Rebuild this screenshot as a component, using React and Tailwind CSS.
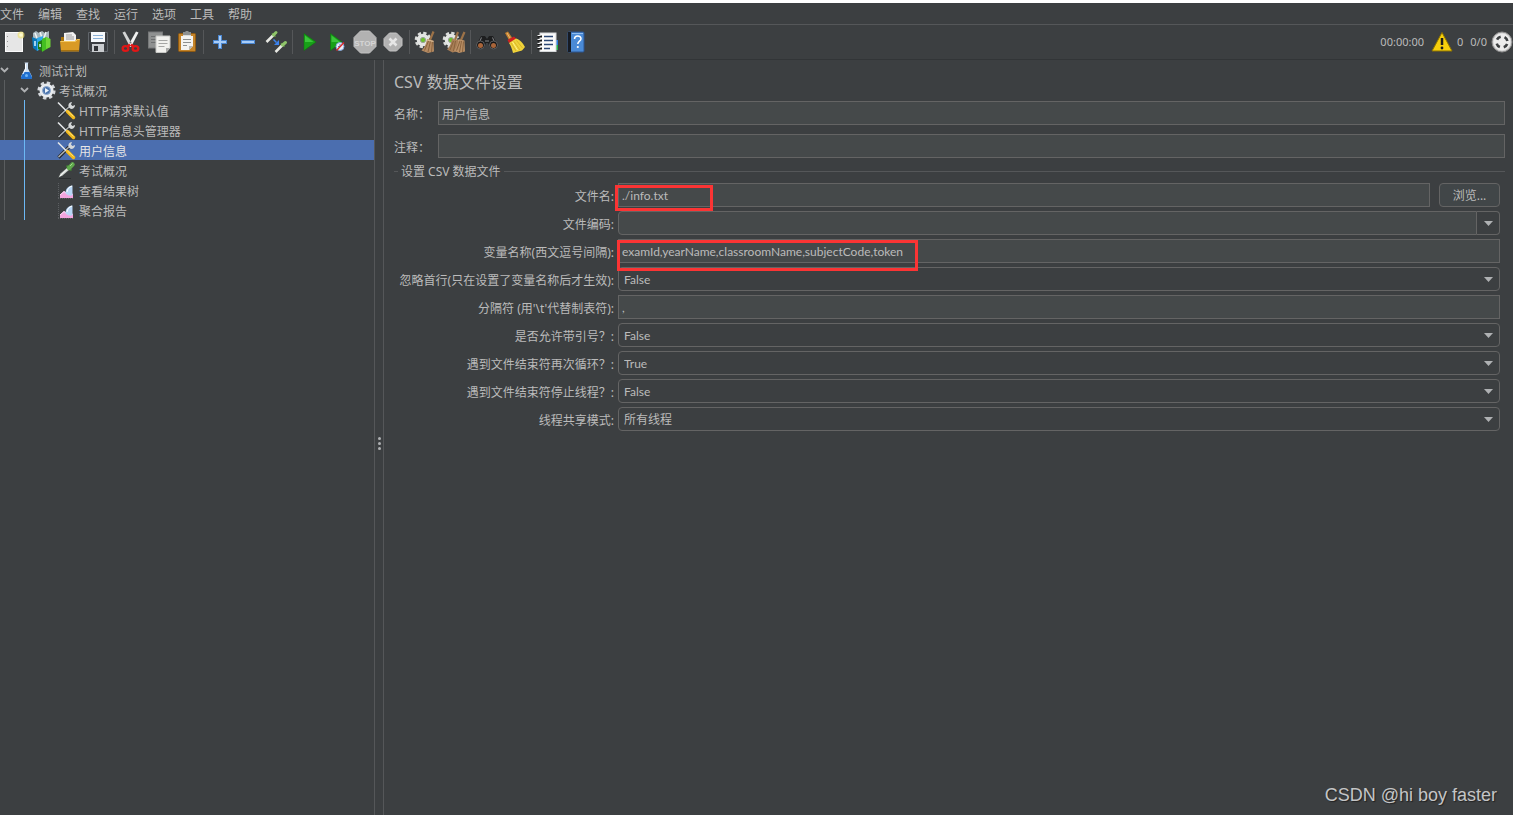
import { useState } from 'react';

const Svg = ({ size = 28, children }) => (
    <svg width={size} height={size} viewBox={`0 0 ${size} ${size}`} fill="none" aria-hidden="true">
        {children}
    </svg>
);

/* Toolbar icons, drawn on a 28px grid */
const NewIcon = () => (
    <Svg>
        <rect x="5.500" y="4.500" width="17" height="19" fill="#e6e6e6" stroke="#fafafa" />
        <path d="M7.500 8v1M7.500 13v1M7.500 18v1" stroke="#999" />
        <circle cx="21" cy="7" r="3.500" fill="#f0e27a" opacity="0.7" />
        <circle cx="21" cy="7" r="1.800" fill="#fffbd0" />
    </Svg>
);

const TemplatesIcon = () => (
    <Svg>
        <path d="M5 5l3-2 3 2 3-2 3 2 4-2v8l-8 3-8-3z" fill="#a9b7bd" />
        <path d="M7 5l2 5M12 4l2 6M18 4l-2 6" stroke="#eef4f6" strokeWidth="1.500" />
        <path d="M4 9l5 2v12l-4-3z" fill="#0b78b8" />
        <path d="M9 10l6-2v12l-6 3z" fill="#2fa8e8" />
        <path d="M10 14l4-2v11l-4-2z" fill="#1f7d12" />
        <path d="M14 11l4-2 4 2v8l-8 5z" fill="#43bf22" />
        <path d="M18 9l4.500 2v8l-4.500 2z" fill="#6ed637" />
        <path d="M7 13v5M12 16v3" stroke="#d6f2ff" strokeWidth="1.500" />
    </Svg>
);

const OpenIcon = () => (
    <Svg>
        <path d="M5 9h6l1 2h11v10H5z" fill="#a8730c" />
        <path d="M8 5l9-1 3 3v9H8z" fill="#f2f2f2" />
        <path d="M10 7h6M10 9h8M10 11h8" stroke="#9c9c9c" />
        <path d="M4 13h15l2-2h3l-1 12.500H5z" fill="#d99a25" />
        <path d="M4.500 13.500h15l2-2h2" stroke="#f3c963" />
        <path d="M5 22.500h18" stroke="#a6710f" />
    </Svg>
);

const SaveIcon = () => (
    <Svg>
        <path d="M4 4h20v20H6l-2-2z" fill="#3b3e42" />
        <path d="M4.500 4.500h19v19h-17l-2-2z" stroke="#60656a" />
        <rect x="7" y="4" width="14" height="10" fill="#f5f8fb" />
        <path d="M9 7.500h10M9 10.500h10" stroke="#8ab0d6" />
        <rect x="8" y="16" width="12" height="8" fill="#c9cccf" />
        <rect x="10" y="18" width="4" height="5" fill="#303236" />
    </Svg>
);

const CutIcon = () => (
    <Svg>
        <path d="M5.500 4.500L8 3.500 15.500 17l-2.500 2z" fill="#d4d6d6" />
        <path d="M21.500 4.500L19 3.500 11.500 17l2.500 2z" fill="#f0f1f1" />
        <circle cx="13.500" cy="14.500" r="1" fill="#777" />
        <ellipse cx="8.500" cy="20.500" rx="2.800" ry="2.400" stroke="#e01717" strokeWidth="2.400" />
        <ellipse cx="18.500" cy="20.500" rx="2.800" ry="2.400" stroke="#e01717" strokeWidth="2.400" />
        <path d="M10.500 18.500l2.500-2M16.500 18.500l-2.500-2" stroke="#e01717" strokeWidth="2.500" />
    </Svg>
);

const CopyIcon = () => (
    <Svg>
        <rect x="3.500" y="4" width="14" height="16" fill="#8f9191" stroke="#77797a" />
        <path d="M6 8.500h9M6 11.500h5M6 14.500h5" stroke="#6d6f70" />
        <path d="M11 8h14v12l-4 4.500H11z" fill="#f1f1ee" stroke="#c7c8c5" />
        <path d="M13.500 12.500h9M13.500 15.500h9M13.500 18.500h6" stroke="#a5a6a4" />
        <path d="M21 24.500V20h4z" fill="#a9aaa8" />
    </Svg>
);

const PasteIcon = () => (
    <Svg>
        <rect x="5.500" y="5.500" width="17" height="18" rx="1" fill="#c4842a" stroke="#8f5a12" />
        <path d="M8 8h12v10l-4 4H8z" fill="#f4f4f2" />
        <path d="M10 11.500h8M10 14.500h8M10 17.500h4" stroke="#8d8f8f" />
        <path d="M16 22v-4h4z" fill="#b9bab8" />
        <path d="M10 4h2l1-1h2l1 1h2v4h-8z" fill="#8e9191" />
        <path d="M10 7.500h8" stroke="#dadcdc" />
    </Svg>
);

const PlusIcon = () => (
    <Svg>
        <path d="M14 7v14M7 14h14" stroke="#4a86d0" strokeWidth="4" />
        <path d="M14 8v12M8 14h12" stroke="#a9cdf7" strokeWidth="2" />
    </Svg>
);

const MinusIcon = () => (
    <Svg>
        <path d="M7 14h14" stroke="#4a86d0" strokeWidth="4" />
        <path d="M8 14h12" stroke="#a9cdf7" strokeWidth="2" />
    </Svg>
);

const ToggleIcon = () => (
    <Svg>
        <path d="M4.500 14l7-7" stroke="#e8e9e4" strokeWidth="2.500" />
        <path d="M10 5.500l3.500 3" stroke="#6aa544" strokeWidth="1.500" />
        <path d="M11.500 7L14 4.500" stroke="#8fc46a" strokeWidth="3" strokeLinecap="round" />
        <path d="M13.500 24l7-7" stroke="#e8e9e4" strokeWidth="2.500" />
        <path d="M19 15.500l3.500 3" stroke="#6aa544" strokeWidth="1.500" />
        <path d="M20.500 17l3-2.500" stroke="#8fc46a" strokeWidth="3" strokeLinecap="round" />
        <path d="M11.500 11.500l3 3" stroke="#3a82ee" strokeWidth="1.500" />
        <path d="M17 12v5h-5z" fill="#3a82ee" />
    </Svg>
);

const RunIcon = () => (
    <Svg>
        <path d="M9 5.500L21 14 9 22.500z" fill="#18a018" stroke="#087808" strokeWidth="0.500" />
        <path d="M10 7.500L18.500 14H10z" fill="#3bc43b" />
    </Svg>
);

const RunNoPauseIcon = () => (
    <Svg>
        <path d="M7.500 5.500L19 14 7.500 22.500z" fill="#18a018" stroke="#087808" strokeWidth="0.500" />
        <path d="M8.500 7.500L17 14H8.500z" fill="#3bc43b" />
        <circle cx="17" cy="18.500" r="4" fill="#e9eef7" stroke="#7fa3d8" />
        <path d="M17 16v2.500h-2" stroke="#557fc2" />
        <path d="M13.500 22.500l7.500-8" stroke="#dc2525" strokeWidth="1.400" />
    </Svg>
);

const StopIcon = () => (
    <Svg>
        <path d="M9.500 3h9L25 9.500v9L18.500 25h-9L3 18.500v-9z" fill="#b2b2b2" stroke="#c3c3c3" />
        <text x="14" y="17.500" textAnchor="middle" fontSize="8" fontWeight="700" fontFamily="Liberation Sans, sans-serif" fill="#d6d6d6">STOP</text>
    </Svg>
);

const ShutdownIcon = () => (
    <Svg>
        <path d="M10.500 5h7l5.500 5.500v7L17.500 23h-7L5 17.500v-7z" fill="#b2b2b2" stroke="#c3c3c3" />
        <path d="M10.500 10.500l7 7M17.500 10.500l-7 7" stroke="#e6e6e6" strokeWidth="2.600" />
    </Svg>
);

const Gear = ({ cx, cy }) => (
    <>
        <circle cx={cx} cy={cy} r="7" stroke="#dcdedc" strokeWidth="2.600" strokeDasharray="3.300 2.200" />
        <circle cx={cx} cy={cy} r="6.300" fill="#e4e6e4" />
        <circle cx={cx} cy={cy} r="2.600" fill="#6cc22c" stroke="#9aa09a" />
    </>
);

const ClearIcon = () => (
    <Svg>
        <Gear cx="11" cy="12" />
        <path d="M21.500 3.500L18 12" stroke="#9c7248" strokeWidth="2.200" />
        <path d="M15 11l6.500 1.500.5 11-6 1.500-6.500-2.500c3-3 4.500-6 5.500-11.500z" fill="#b48a62" />
        <path d="M16.500 13l-4 9.500M18.500 13l-2.500 11M20.500 13.500l-1 10.500" stroke="#8a633d" />
        <path d="M15 12l6.500 1.500" stroke="#dcc09a" />
    </Svg>
);

const ClearAllIcon = () => (
    <Svg>
        <Gear cx="11" cy="12" />
        <path d="M18 4l-3 8M24.500 4l-3.500 8" stroke="#9c7248" strokeWidth="2.200" />
        <path d="M12 11l6 1 .5 11-6 1.500-5.500-3c3-3 4-6 5-10.500z" fill="#a87e56" />
        <path d="M18.500 11l6 1.500.5 11-6 1.500-5.500-2.500c3-3 4-6 5-11.500z" fill="#b98f66" />
        <path d="M13.500 13l-3.500 9M15.500 13l-2 10M20 13l-3.500 9.500M21.500 13l-2 11M23.500 13.500l-1 10.500" stroke="#8a633d" />
    </Svg>
);

const SearchIcon = () => (
    <Svg>
        <path d="M8 8h4l2 3 2-3h4l4 8-2 4h-5l-2-5h-2l-2 5H6l-2-4z" fill="#1d1e1f" />
        <path d="M8.500 9.500L7 13M19.500 9.500l1.500 3.500M12 13h4" stroke="#85878a" />
        <circle cx="7.500" cy="17" r="4" fill="#151515" stroke="#5d5e60" />
        <circle cx="20.500" cy="17" r="4" fill="#151515" stroke="#5d5e60" />
        <circle cx="7.500" cy="17.500" r="2.500" fill="#a9653a" />
        <circle cx="20.500" cy="17.500" r="2.500" fill="#a9653a" />
    </Svg>
);

const ResetSearchIcon = () => (
    <Svg>
        <path d="M4 5l3-1.500 4 6-3 2.500z" fill="#c5822f" />
        <path d="M6 5l3 5" stroke="#e9b876" />
        <path d="M6.500 12L13 8.500l2.500 2.500L8 15z" fill="#cf2020" />
        <path d="M8 15l7-4.500c4 1 7 5 9 8.500l-3 3.500-9 2.500c-1-4-2-7-4-10z" fill="#f0d33a" />
        <path d="M10 15l5 8M13 13.500l6 8.500M15.500 12.500l6 7.500" stroke="#cfa920" strokeWidth="0.700" />
        <path d="M11.500 14l5 8" stroke="#fff48a" />
    </Svg>
);

const FunctionHelperIcon = () => (
    <Svg>
        <path d="M21 12h3v5h-3z" fill="#2a7de0" />
        <path d="M21 17h3v5h-3z" fill="#23b14d" />
        <rect x="6" y="5" width="16" height="18.500" fill="#fbfbfb" stroke="#d5d7d9" />
        <path d="M10 8.500h9M10 12.500h9M10 16.500h9M10 20.500h6" stroke="#2c4875" strokeWidth="1.300" />
        <path d="M3.500 8.500H8M3.500 12.500H8M3.500 16.500H8M3.500 20.500H8" stroke="#191919" strokeWidth="2" />
        <path d="M3.500 7.500h3M3.500 11.500h3M3.500 15.500h3M3.500 19.500h3" stroke="#f4f4f4" />
    </Svg>
);

const HelpIcon = () => (
    <Svg>
        <rect x="6" y="4" width="16" height="20" rx="1" fill="#4a8ad6" stroke="#2a5591" />
        <path d="M6 4h3v20H6z" fill="#161b24" />
        <path d="M10 5.500h11" stroke="#8fbdf0" />
        <path d="M12.500 11c0-4 6.500-4 6.500-.3 0 2.500-3.200 2.500-3.200 5.300" stroke="#fff" strokeWidth="1.500" />
        <circle cx="15.800" cy="19" r="1.100" fill="#fff" />
    </Svg>
);

const toolGroups = [
    [
        ['新建', NewIcon],
        ['模板', TemplatesIcon],
        ['打开', OpenIcon],
        ['保存', SaveIcon],
    ],
    [
        ['剪切', CutIcon],
        ['复制', CopyIcon],
        ['粘贴', PasteIcon],
    ],
    [
        ['全部展开', PlusIcon],
        ['全部折叠', MinusIcon],
        ['切换', ToggleIcon],
    ],
    [
        ['启动', RunIcon],
        ['不停顿开始', RunNoPauseIcon],
        ['停止', StopIcon],
        ['关闭', ShutdownIcon],
    ],
    [
        ['清除', ClearIcon],
        ['清除全部', ClearAllIcon],
    ],
    [
        ['查找', SearchIcon],
        ['重置搜索', ResetSearchIcon],
    ],
    [
        ['函数助手', FunctionHelperIcon],
        ['帮助', HelpIcon],
    ],
];

/* Tree icons, drawn on a 20px grid */
const PlanIcon = () => (
    <Svg size={20}>
        <path d="M8.500 2.500h4l-.5 1v5l4 8c.3 1-.3 2-1 2H6c-.8 0-1.300-1-1-2l4-8v-5z" fill="#cfe0f2" />
        <path d="M7.500 12h6l2.500 5c.3 1-.3 2-1 2H6c-.8 0-1.300-1-1-2z" fill="#1f6fd0" />
        <path d="M9.500 4v5L7 14" stroke="#fff" />
        <circle cx="10.500" cy="15.500" r="1.500" fill="#6db5f7" />
    </Svg>
);

const ThreadGroupIcon = () => (
    <Svg size={20}>
        <circle cx="10.500" cy="10.500" r="7.700" stroke="#d5d8dc" strokeWidth="2.800" strokeDasharray="3.400 2.647" />
        <circle cx="10.500" cy="10.500" r="5.500" fill="#4a74ad" stroke="#e8ebee" strokeWidth="3" />
        <circle cx="10.500" cy="10.500" r="4" stroke="#8fa9cc" />
        <path d="M9 8l4 2.500L9 13z" fill="#eef4fb" />
    </Svg>
);

const ConfigIcon = () => (
    <Svg size={20}>
        <path d="M2.500 17.500L13 7" stroke="#23272a" strokeWidth="3.200" />
        <path d="M2.500 17L13.500 6.500" stroke="#aeb2b4" strokeWidth="1.500" />
        <path d="M13 7.500a3.500 3.500 0 0 1 3-5.500l-1 2.500 1.500 1.500 2.500-1a3.500 3.500 0 0 1-5 3.500z" fill="#d5d8d9" />
        <path d="M2 2.500l9 9" stroke="#e5e7e8" strokeWidth="1.600" />
        <path d="M11.500 11.500l6 6" stroke="#f2b91c" strokeWidth="3.500" strokeLinecap="round" />
        <path d="M11.500 11l6 5.500" stroke="#ffe27a" />
    </Svg>
);

const SamplerIcon = () => (
    <Svg size={20}>
        <path d="M3 18.500h12" stroke="#2b2e30" />
        <path d="M2.500 17.500l2-4 7-6 2 2-7 6z" fill="#c9cfcb" />
        <path d="M4 16l7.500-7" stroke="#fff" />
        <path d="M10.500 5.500l5 5" stroke="#3f7a34" strokeWidth="2" />
        <path d="M13 8l3.500-3.500" stroke="#5fa84c" strokeWidth="4.500" strokeLinecap="round" />
        <path d="M14 6l2.500-2.500" stroke="#a4dc8e" />
    </Svg>
);

const ListenerIcon = () => (
    <Svg size={20}>
        <path d="M2.500 3v16M2 18.500h16" stroke="#5c5f62" strokeDasharray="1 1" />
        <path d="M4 18v-3l4-4 3 2 3-1 3 2v4z" fill="#f2a5df" />
        <path d="M4 15l4-3.500 3 2.500" stroke="#fbe2f6" />
        <path d="M9.500 13c0-4 2.500-7 7-7.500V15c-2 1.500-5 .5-7-2z" fill="#b8d6f6" />
        <path d="M11 12c.5-3 2-5 5-6" stroke="#fff" />
    </Svg>
);

const treeNodes = [
    { label: '测试计划', level: 0, icon: PlanIcon, open: true },
    { label: '考试概况', level: 1, icon: ThreadGroupIcon, open: true },
    { label: 'HTTP请求默认值', level: 2, icon: ConfigIcon },
    { label: 'HTTP信息头管理器', level: 2, icon: ConfigIcon },
    { label: '用户信息', level: 2, icon: ConfigIcon },
    { label: '考试概况', level: 2, icon: SamplerIcon },
    { label: '查看结果树', level: 2, icon: ListenerIcon },
    { label: '聚合报告', level: 2, icon: ListenerIcon },
];

const menus = ['文件', '编辑', '查找', '运行', '选项', '工具', '帮助'];

const fieldClass = "h-6 min-w-0 flex-1 border border-[#646464] bg-[#45494a] px-[3px] pt-px font-['Lato','Noto_Sans_CJK_SC',sans-serif] text-[#bbbbbb] outline-none";

const DownArrow = () => (
    <svg width="9" height="5" viewBox="0 0 9 5" aria-hidden="true">
        <path d="M0 0h9L4.500 5z" fill="#afb1b3" />
    </svg>
);

function Row({ id, label, children }) {
    return (
        <div className="flex items-center gap-1">
            <label htmlFor={id} className="w-[220px] shrink-0 pt-[3px] text-right whitespace-nowrap">
                {label}
            </label>
            <div className="relative flex min-w-0 flex-1 items-center">{children}</div>
        </div>
    );
}

function SelectRow({ id, label, value, options }) {
    return (
        <Row id={id} label={label}>
            <select
                id={id}
                defaultValue={value}
                className="h-6 w-full appearance-none rounded-sm border border-[#646464] bg-[#3c3f41] px-[5px] pt-[2px] font-['Lato','Noto_Sans_CJK_SC',sans-serif] text-[#bbbbbb] outline-none"
            >
                {options.map((o) => (
                    <option key={o}>{o}</option>
                ))}
            </select>
            <span className="pointer-events-none absolute right-[7px]">
                <DownArrow />
            </span>
        </Row>
    );
}

function Toolbar() {
    return (
        <div className="flex h-[35px] items-center border-b border-[#323537]">
            {toolGroups.map((group, i) => (
                <div key={i} className="flex items-center">
                    {i > 0 && <span className="mx-[2px] h-6 w-px bg-[#555759]" />}
                    {group.map(([name, Icon]) => (
                        <button key={name} type="button" title={name} aria-label={name}>
                            <Icon />
                        </button>
                    ))}
                </div>
            ))}
            <div className="ml-auto flex items-center">
                <span className="text-[11px]">00:00:00</span>
                <button type="button" aria-label="日志" className="mr-1 ml-[7px]">
                    <Svg size={22}>
                        <path d="M11 1.500L21 20H1z" fill="#f6cf0c" stroke="#8f7400" strokeLinejoin="round" />
                        <path d="M11 7v7" stroke="#1c1c1c" strokeWidth="2.500" />
                        <circle cx="11" cy="17" r="1.400" fill="#1c1c1c" />
                    </Svg>
                </button>
                <span className="text-[11px]">0</span>
                <span className="ml-[7px] text-[11px]">0/0</span>
                <span className="ml-1">
                    <Svg size={22}>
                        <circle cx="11" cy="11" r="10" fill="#d0d0d0" stroke="#8c8c8c" />
                        <circle cx="11" cy="11" r="8.500" fill="#ececec" />
                        <circle cx="11" cy="11" r="5.500" stroke="#3c3f41" strokeWidth="2.600" strokeDasharray="4.600 4.040" strokeDashoffset="-2" />
                    </Svg>
                </span>
            </div>
        </div>
    );
}

function Tree() {
    const [selected, setSelected] = useState(4);

    return (
        <ul className="w-[374px] shrink-0">
            {treeNodes.map(({ label, level, icon: Icon, open }, i) => (
                <li key={i}>
                    <button
                        type="button"
                        onClick={() => setSelected(i)}
                        className={`flex h-5 w-full items-center whitespace-nowrap ${selected === i ? 'bg-[#4b6eaf] text-[#e6e6e6]' : ''}`}
                    >
                        {level > 0 && (
                            <span className="h-5 w-5 pl-1">
                                <span className={`block h-5 w-px ${selected === i ? '' : 'bg-[#5a5d5f]'}`} />
                            </span>
                        )}
                        {level > 1 && (
                            <span className="h-5 w-5 pl-1">
                                <span className="block h-5 w-px bg-[#6cb8f5]" />
                            </span>
                        )}
                        <span className="w-4">
                            {open && (
                                <svg width="10" height="10" viewBox="0 0 10 10" fill="none" aria-hidden="true">
                                    <path d="M1 3l3.500 3.500L8 3" stroke="#afb1b3" strokeWidth="1.800" />
                                </svg>
                            )}
                        </span>
                        <Icon />
                        <span className="ml-[3px] pt-[3px]">{label}</span>
                    </button>
                </li>
            ))}
        </ul>
    );
}

function CsvDataSet() {
    return (
        <main className="min-w-0 flex-1 pt-2 pr-2 pl-[10px]">
            <h1 className="text-base leading-7">CSV 数据文件设置</h1>

            <div className="mt-[5px] flex items-center">
                <label htmlFor="name" className="w-11 shrink-0 pt-[3px]">名称：</label>
                <input id="name" defaultValue="用户信息" className={fieldClass} />
            </div>
            <div className="mt-[9px] flex items-center">
                <label htmlFor="comment" className="w-11 shrink-0 pt-[3px]">注释：</label>
                <input id="comment" className={fieldClass} />
            </div>

            <fieldset className="mt-1 border-t border-[#555759]">
                <legend className="ml-1 bg-[#3c3f41] px-[3px] pt-[2px] leading-4">设置 CSV 数据文件</legend>
                <div className="flex flex-col gap-1 pt-[3px] pr-[5px]">
                    <Row id="filename" label="文件名:">
                        <input id="filename" defaultValue="./info.txt" className={fieldClass} />
                        <button
                            type="button"
                            className="ml-[9px] h-6 w-[61px] rounded-sm border border-[#646464] bg-[#414648] pt-[2px]"
                        >
                            浏览...
                        </button>
                        <span className="pointer-events-none absolute top-[2px] -left-[3px] z-10 h-[26px] w-[98px] border-3 border-[#fb3434]" />
                    </Row>
                    <Row id="encoding" label="文件编码:">
                        <input id="encoding" className={`${fieldClass} rounded-l-sm`} />
                        <button
                            type="button"
                            aria-label="文件编码"
                            className="flex h-6 w-[23px] items-center justify-center rounded-r-sm border border-l-0 border-[#646464]"
                        >
                            <DownArrow />
                        </button>
                    </Row>
                    <Row id="variables" label="变量名称(西文逗号间隔):">
                        <input
                            id="variables"
                            defaultValue="examId,yearName,classroomName,subjectCode,token"
                            className={fieldClass}
                        />
                        <span className="pointer-events-none absolute top-px -left-px z-10 h-[31px] w-[301px] border-3 border-[#fb3434]" />
                    </Row>
                    <SelectRow id="ignoreFirst" label="忽略首行(只在设置了变量名称后才生效):" value="False" options={['True', 'False']} />
                    <Row id="delimiter" label="分隔符 (用'\t'代替制表符):">
                        <input id="delimiter" defaultValue="," className={fieldClass} />
                    </Row>
                    <SelectRow id="quoted" label="是否允许带引号？:" value="False" options={['True', 'False']} />
                    <SelectRow id="recycle" label="遇到文件结束符再次循环？:" value="True" options={['True', 'False']} />
                    <SelectRow id="stopThread" label="遇到文件结束符停止线程？:" value="False" options={['True', 'False']} />
                    <SelectRow id="shareMode" label="线程共享模式:" value="所有线程" options={['所有线程', '当前线程组', '当前线程']} />
                </div>
            </fieldset>
        </main>
    );
}

export default function App() {
    return (
        <div className="relative flex min-h-screen flex-col border-t-3 border-white bg-[#3c3f41] font-['Noto_Sans','Noto_Sans_CJK_SC',sans-serif] text-xs text-[#bbbbbb]">
            <nav className="flex h-[22px] items-center gap-[14px] border-b border-[#555759] pt-[2px]">
                {menus.map((m) => (
                    <button key={m} type="button">{m}</button>
                ))}
            </nav>
            <Toolbar />
            <div className="flex flex-1">
                <Tree />
                {/* Splitter */}
                <div className="flex w-[10px] shrink-0 flex-col items-center justify-center gap-[2px] border-x border-[#555759] pt-3">
                    <span className="h-[3px] w-[3px] rounded-full bg-[#afb1b3]" />
                    <span className="h-[3px] w-[3px] rounded-full bg-[#afb1b3]" />
                    <span className="h-[3px] w-[3px] rounded-full bg-[#afb1b3]" />
                </div>
                <CsvDataSet />
            </div>
            <p className="absolute right-4 bottom-2 font-['Liberation_Sans',sans-serif] text-lg leading-6 text-[#c4c5c6] [text-shadow:1px_1px_1px_#222]">
                CSDN @hi boy faster
            </p>
        </div>
    );
}
